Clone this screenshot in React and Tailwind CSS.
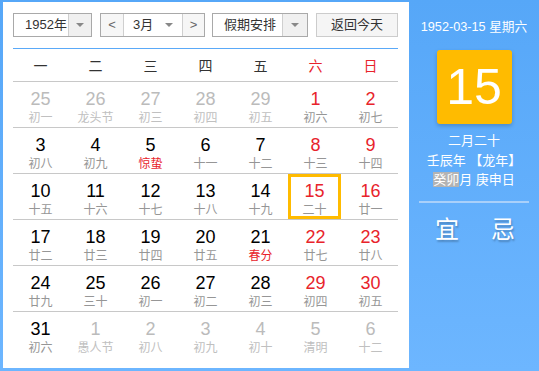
import React from 'react';

const weekdays = ['一', '二', '三', '四', '五', '六', '日'];

// [day, lunar, type] type: o = other month, n = current month, t = solar term / festival red
const rows = [
  [[25, '初一', 'o'], [26, '龙头节', 'o'], [27, '初三', 'o'], [28, '初四', 'o'], [29, '初五', 'o'], [1, '初六', 'n'], [2, '初七', 'n']],
  [[3, '初八', 'n'], [4, '初九', 'n'], [5, '惊蛰', 't'], [6, '十一', 'n'], [7, '十二', 'n'], [8, '十三', 'n'], [9, '十四', 'n']],
  [[10, '十五', 'n'], [11, '十六', 'n'], [12, '十七', 'n'], [13, '十八', 'n'], [14, '十九', 'n'], [15, '二十', 'n'], [16, '廿一', 'n']],
  [[17, '廿二', 'n'], [18, '廿三', 'n'], [19, '廿四', 'n'], [20, '廿五', 'n'], [21, '春分', 't'], [22, '廿七', 'n'], [23, '廿八', 'n']],
  [[24, '廿九', 'n'], [25, '三十', 'n'], [26, '初一', 'n'], [27, '初二', 'n'], [28, '初三', 'n'], [29, '初四', 'n'], [30, '初五', 'n']],
  [[31, '初六', 'n'], [1, '愚人节', 'o'], [2, '初八', 'o'], [3, '初九', 'o'], [4, '初十', 'o'], [5, '清明', 'o'], [6, '十二', 'o']],
];

const Arrow = () => (
  <span className="w-0 h-0 border-l-[4px] border-r-[4px] border-t-[4px] border-l-transparent border-r-transparent border-t-[#888]" />
);

const DayCell = ({ day, lunar, type, col, today }) => {
  const weekend = col >= 5;
  let numColor = 'text-black';
  if (type === 'o') numColor = 'text-[#bbbbbb]';
  else if (weekend) numColor = 'text-[#e8232b]';
  let lunarColor = 'text-[#969696]';
  if (type === 'o') lunarColor = 'text-[#c0c0c0]';
  if (type === 't') lunarColor = 'text-[#e8232b]';

  return (
    <div className="w-[55px] h-full">
      <div
        className={`flex flex-col items-center h-full ${
          today ? 'w-[53px] border-[3px] border-[#ffbb00] pt-[4px]' : 'pt-[7px]'
        }`}
      >
        <span className={`text-[18px] leading-[20px] font-['Liberation_Sans',sans-serif] ${numColor}`}>{day}</span>
        <span className={`mt-[1px] text-[12px] leading-[16px] ${lunarColor}`}>{lunar}</span>
      </div>
    </div>
  );
};

export default function App() {
  return (
    <div className="w-[539px] h-[371px] flex pl-[3px] pt-[2px] pb-[3px] bg-gradient-to-b from-[#56a7f8] to-[#6db6ff] font-['Liberation_Sans','Noto_Sans_CJK_SC',sans-serif] overflow-hidden">
      {/* Calendar */}
      <div className="w-[406px] h-full bg-white pl-[10px] pt-[11px]">
        {/* Controls */}
        <div className="flex h-[24px] text-[13px] text-[#333]">
          <div className="w-[79px] flex border border-[#a9a9a9]">
            <span className="flex-1 pl-[11px] leading-[22px]">1952年</span>
            <span className="w-[23px] flex items-center justify-center bg-[#f0f0f0] border-l border-[#cfcfcf]">
              <Arrow />
            </span>
          </div>
          <div className="ml-[8px] w-[105px] flex border border-[#a9a9a9]">
            <span className="w-[23px] flex items-center justify-center bg-[#f6f6f6] border-r border-[#cfcfcf] text-[#666] leading-[22px]">&lt;</span>
            <span className="flex-1 flex items-center justify-between pl-[9px] pr-[9px]">
              <span className="leading-[22px]">3月</span>
              <Arrow />
            </span>
            <span className="w-[22px] flex items-center justify-center bg-[#f6f6f6] border-l border-[#cfcfcf] text-[#666] leading-[22px]">&gt;</span>
          </div>
          <div className="ml-[7px] w-[96px] flex border border-[#a9a9a9]">
            <span className="flex-1 pl-[11px] leading-[22px]">假期安排</span>
            <span className="w-[25px] flex items-center justify-center bg-[#f0f0f0] border-l border-[#cfcfcf]">
              <Arrow />
            </span>
          </div>
          <button className="ml-[8px] w-[82px] bg-[#f5f5f5] border border-[#cccccc] leading-[22px] text-[13px] text-[#333]">
            返回今天
          </button>
        </div>

        <div className="mt-[11px] w-[385px] h-[1px] bg-[#5aa9f8]" />

        {/* Week header */}
        <div className="w-[385px] h-[33px] flex items-center pt-[3px] border-b border-[#c8c8c8] text-[14px]">
          {weekdays.map((w, i) => (
            <span key={w} className={`w-[55px] text-center ${i >= 5 ? 'text-[#e8232b]' : 'text-[#333]'}`}>
              {w}
            </span>
          ))}
        </div>

        {/* Days */}
        <div className="w-[385px]">
          {rows.map((row, ri) => (
            <div key={ri} className={`flex h-[46px] ${ri < rows.length - 1 ? 'border-b border-[#c8c8c8]' : ''}`}>
              {row.map(([d, l, t], ci) => (
                <DayCell key={ci} day={d} lunar={l} type={t} col={ci} today={ri === 2 && ci === 5} />
              ))}
            </div>
          ))}
        </div>
      </div>

      {/* Side panel */}
      <div className="flex-1 flex flex-col items-center px-[10px] text-white">
        <div className="mt-[17px] text-[12.7px] leading-[16px] whitespace-nowrap">1952-03-15 星期六</div>
        <div className="mt-[15px] w-[75px] h-[74px] bg-[#ffbb00] rounded-[3px] shadow-[0_2px_4px_rgba(0,0,0,0.2)] flex items-center justify-center text-[50px] leading-none">
          15
        </div>
        <div className="mt-[7px] text-[13px] leading-[19.5px] text-center">
          <div>二月二十</div>
          <div>壬辰年 【龙年】</div>
          <div>
            <span className="bg-[#b3b3b3]">癸卯</span>月 庚申日
          </div>
        </div>
        <div className="mt-[11px] w-full h-[2px] bg-[#a9d0fa]" />
        <div className="mt-[13px] flex gap-[32px] text-[24px] leading-[28px] pl-[2px] [text-shadow:1px_2px_2px_rgba(0,0,0,0.25)]">
          <span>宜</span>
          <span>忌</span>
        </div>
      </div>
    </div>
  );
}
